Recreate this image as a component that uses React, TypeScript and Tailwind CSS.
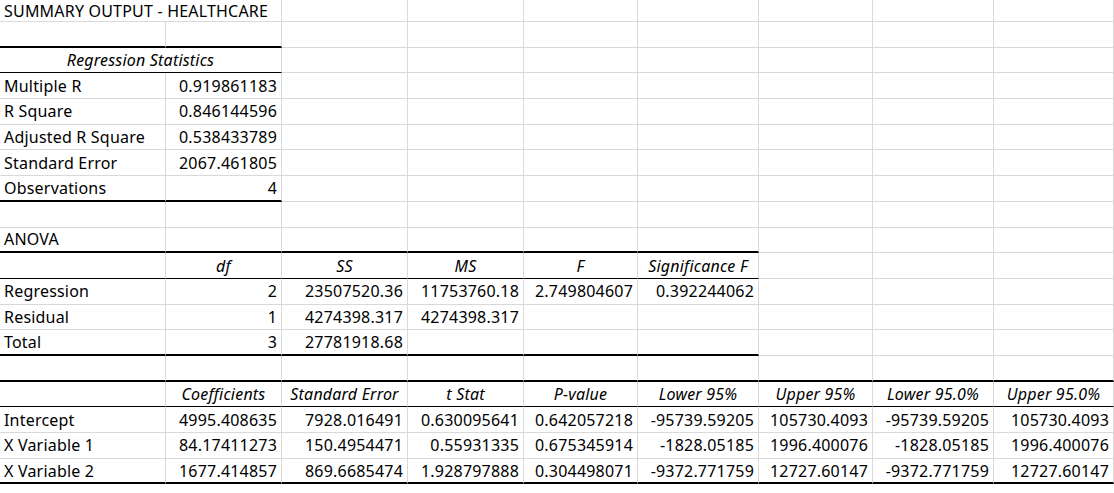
const widths = ['w-[166px]', 'w-[116px]', 'w-[126px]', 'w-[116px]', 'w-[114px]', 'w-[121px]', 'w-[114px]', 'w-[121px]', 'w-[120px]'];

type Row = { cells: string[]; head?: boolean; line?: 'thick' | 'thin'; span?: number; h?: string };

const rows: Row[] = [
  { cells: ['SUMMARY OUTPUT - HEALTHCARE'], h: 'h-[22px]' },
  { cells: [], line: 'thick', span: 2 },
  { cells: ['Regression Statistics'], head: true, line: 'thin', span: 2 },
  { cells: ['Multiple R', '0.919861183'] },
  { cells: ['R Square', '0.846144596'] },
  { cells: ['Adjusted R Square', '0.538433789'] },
  { cells: ['Standard Error', '2067.461805'] },
  { cells: ['Observations', '4'], line: 'thick', span: 2 },
  { cells: [] },
  { cells: ['ANOVA'], line: 'thick', span: 6 },
  { cells: ['', 'df', 'SS', 'MS', 'F', 'Significance F'], head: true, line: 'thin', span: 6 },
  { cells: ['Regression', '2', '23507520.36', '11753760.18', '2.749804607', '0.392244062'] },
  { cells: ['Residual', '1', '4274398.317', '4274398.317'] },
  { cells: ['Total', '3', '27781918.68'], line: 'thick', span: 6 },
  { cells: [], line: 'thick', span: 9 },
  {
    cells: ['', 'Coefficients', 'Standard Error', 't Stat', 'P-value', 'Lower 95%', 'Upper 95%', 'Lower 95.0%', 'Upper 95.0%'],
    head: true,
    line: 'thin',
    span: 9,
  },
  { cells: ['Intercept', '4995.408635', '7928.016491', '0.630095641', '0.642057218', '-95739.59205', '105730.4093', '-95739.59205', '105730.4093'] },
  { cells: ['X Variable 1', '84.17411273', '150.4954471', '0.55931335', '0.675345914', '-1828.05185', '1996.400076', '-1828.05185', '1996.400076'] },
  { cells: ['X Variable 2', '1677.414857', '869.6685474', '1.928797888', '0.304498071', '-9372.771759', '12727.60147', '-9372.771759', '12727.60147'], line: 'thick', span: 9 },
];

function Cell({ text, w, col, row }: { text: string; w: string; col: number; row: Row }) {
  const inLine = row.line && col < (row.span ?? 0);
  const border = inLine
    ? row.line === 'thick'
      ? 'border-b-2 border-b-black'
      : 'border-b border-b-black'
    : 'border-b border-b-[#d9d9d9]';
  const numeric = /^-?[0-9.]+$/.test(text);
  const align = row.head ? 'justify-center italic' : numeric && col > 0 ? 'justify-end' : 'justify-start';
  return (
    <div className={`flex shrink-0 items-center whitespace-nowrap border-r border-r-[#d9d9d9] px-[4px] ${w} ${border} ${align}`}>
      {text}
    </div>
  );
}

export default function App() {
  return (
    <div className="h-[493px] w-[1114px] overflow-hidden bg-white font-['Lato',sans-serif] text-[16px] tracking-[0.2px] text-black">
      {rows.map((row, r) => {
        const merged = r === 0 || r === 2;
        return (
          <div key={r} className={`flex ${row.h ?? 'h-[25.7px]'}`}>
            {merged ? (
              <>
                <Cell text={row.cells[0]} w="w-[282px]" col={0} row={row} />
                {widths.slice(2).map((w, c) => (
                  <Cell key={c} text="" w={w} col={c + 2} row={row} />
                ))}
              </>
            ) : (
              widths.map((w, c) => <Cell key={c} text={row.cells[c] ?? ''} w={w} col={c} row={row} />)
            )}
          </div>
        );
      })}
    </div>
  );
}
